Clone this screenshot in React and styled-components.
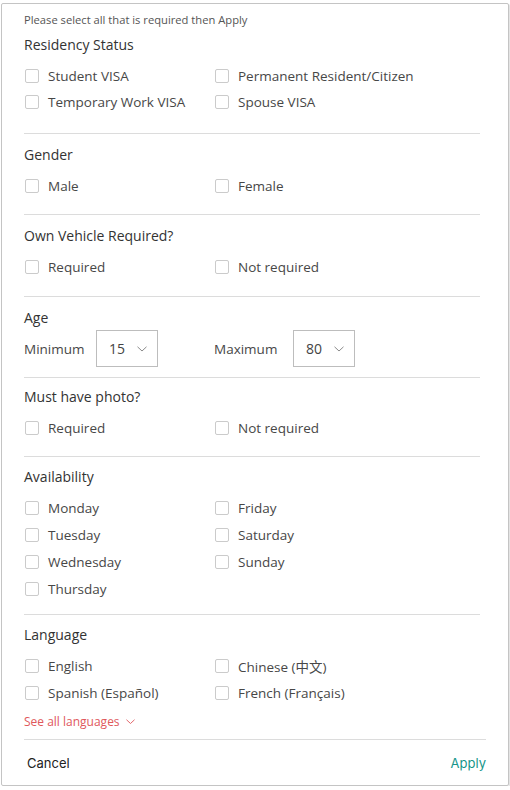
import React from 'react';
import styled, { createGlobalStyle } from 'styled-components';

const GlobalStyle = createGlobalStyle`
  * { box-sizing: border-box; }
  body {
    margin: 0;
    background: #fff;
    font-family: 'Open Sans', 'Noto Sans', 'Noto Sans CJK SC', sans-serif;
    color: #444;
  }
`;

const Panel = styled.div`
  margin: 3px 0 0 1px;
  width: 508px;
  height: 783px;
  border: 1px solid #c4c4c4;
  border-radius: 2px;
  box-shadow: 1px 1px 1px rgba(0, 0, 0, 0.12);
  padding: 8px 28px 0 22px;
  display: flex;
  flex-direction: column;
`;

const Intro = styled.div`
  font-size: 11.2px;
  line-height: 16px;
  color: #555;
`;

const Section = styled.div`
  padding: ${p => p.pad || '11px 0 15px'};
  border-top: ${p => (p.first ? 'none' : '1px solid #dcdcdc')};
`;

const Heading = styled.div`
  font-size: 14px;
  font-weight: 500;
  line-height: 20px;
  color: #333;
`;

const Options = styled.div`
  margin-top: ${p => p.gap ?? 7}px;
  display: grid;
  grid-template-columns: 190px 1fr;
  grid-auto-rows: ${p => p.row || 27}px;
`;

const Option = styled.label`
  display: flex;
  align-items: center;
  gap: 9px;
  font-size: 13.5px;
  color: #474747;
  padding-left: 1px;
`;

const Box = styled.span`
  width: 14px;
  height: 14px;
  border: 1px solid #cbcbcb;
  border-radius: 2px;
  background: #fff;
  flex-shrink: 0;
`;

const AgeRow = styled.div`
  margin-top: 2px;
  display: grid;
  grid-template-columns: 190px 1fr;
`;

const AgeField = styled.div`
  display: flex;
  align-items: center;
  font-size: 13.5px;
  color: #474747;
`;

const AgeLabel = styled.span`
  width: ${p => p.w}px;
`;

const Select = styled.div`
  width: 62px;
  height: 37px;
  border: 1px solid #bdbdbd;
  display: flex;
  align-items: center;
  justify-content: space-between;
  padding: 0 10px 0 12px;
  font-size: 14px;
  color: #444;
`;

const SeeAll = styled.div`
  margin-top: 7px;
  display: flex;
  align-items: center;
  gap: 6px;
  font-size: 12px;
  line-height: 18px;
  color: #e0585c;
`;

const Footer = styled.div`
  flex: 1;
  border-top: 1px solid #dcdcdc;
  display: flex;
  align-items: center;
  justify-content: space-between;
  margin-right: -6px;
  padding: 0 0 0 3px;
  font-family: Inter, 'Open Sans', sans-serif;
  font-size: 13px;
  font-weight: 400;
`;

const FooterButton = styled.span`
  color: ${p => p.color};
`;

const Chevron = ({ color = '#8a8a8a', size = 10 }) => (
  <svg width={size} height={size * 0.6} viewBox="0 0 10 6" fill="none">
    <path d="M0.5 0.8 L5 5 L9.5 0.8" stroke={color} strokeWidth="1" />
  </svg>
);

const CheckList = ({ items, row, gap }) => (
  <Options row={row} gap={gap}>
    {items.map(label => (
      <Option key={label}>
        <Box />
        {label}
      </Option>
    ))}
  </Options>
);

export default function App() {
  return (
    <>
      <GlobalStyle />
      <Panel>
        <Intro>Please select all that is required then Apply</Intro>
        <Section first pad="7px 0 18px">
          <Heading>Residency Status</Heading>
          <CheckList row={26} gap={8} items={['Student VISA', 'Permanent Resident/Citizen', 'Temporary Work VISA', 'Spouse VISA']} />
        </Section>
        <Section>
          <Heading>Gender</Heading>
          <CheckList items={['Male', 'Female']} />
        </Section>
        <Section pad="11px 0 16px">
          <Heading>Own Vehicle Required?</Heading>
          <CheckList items={['Required', 'Not required']} />
        </Section>
        <Section pad="11px 0 10px">
          <Heading>Age</Heading>
          <AgeRow>
            <AgeField>
              <AgeLabel w={72}>Minimum</AgeLabel>
              <Select>15 <Chevron /></Select>
            </AgeField>
            <AgeField>
              <AgeLabel w={79}>Maximum</AgeLabel>
              <Select>80 <Chevron /></Select>
            </AgeField>
          </AgeRow>
        </Section>
        <Section pad="9px 0 15px">
          <Heading>Must have photo?</Heading>
          <CheckList items={['Required', 'Not required']} />
        </Section>
        <Section pad="10px 0 12px">
          <Heading>Availability</Heading>
          <CheckList items={['Monday', 'Friday', 'Tuesday', 'Saturday', 'Wednesday', 'Sunday', 'Thursday']} />
        </Section>
        <Section pad="10px 0 8px">
          <Heading>Language</Heading>
          <CheckList items={['English', 'Chinese (中文)', 'Spanish (Español)', 'French (Français)']} />
          <SeeAll>See all languages <Chevron color="#e0585c" size={9} /></SeeAll>
        </Section>
        <Footer>
          <FooterButton color="#222">Cancel</FooterButton>
          <FooterButton color="#17968a">Apply</FooterButton>
        </Footer>
      </Panel>
    </>
  );
}
